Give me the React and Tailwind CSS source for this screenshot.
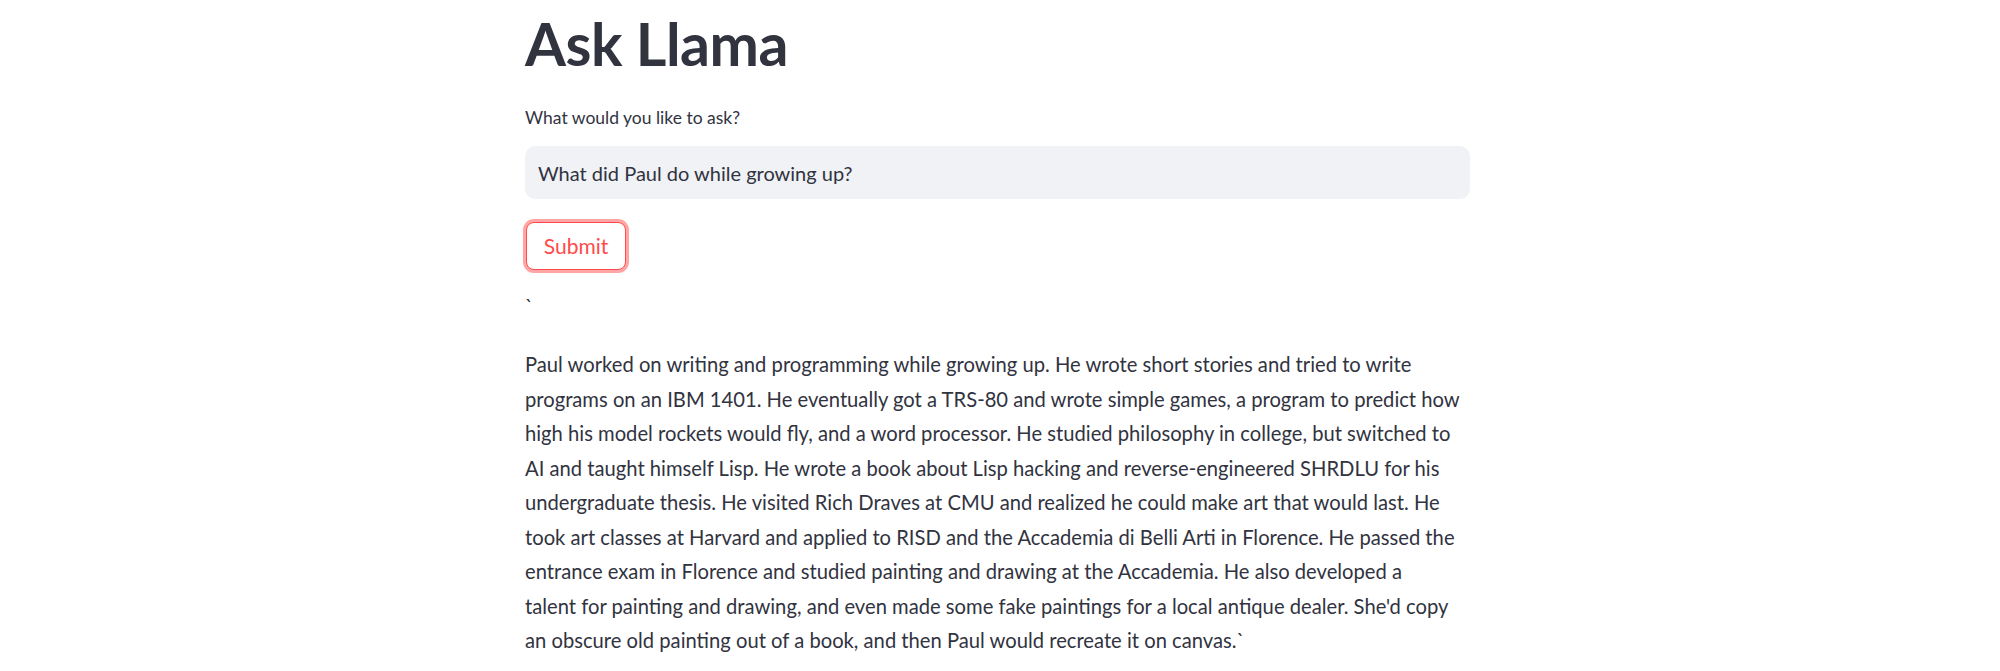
import React from "react";

const answer = [
  "Paul worked on writing and programming while growing up. He wrote short stories and tried to write",
  "programs on an IBM 1401. He eventually got a TRS-80 and wrote simple games, a program to predict how",
  "high his model rockets would fly, and a word processor. He studied philosophy in college, but switched to",
  "AI and taught himself Lisp. He wrote a book about Lisp hacking and reverse-engineered SHRDLU for his",
  "undergraduate thesis. He visited Rich Draves at CMU and realized he could make art that would last. He",
  "took art classes at Harvard and applied to RISD and the Accademia di Belli Arti in Florence. He passed the",
  "entrance exam in Florence and studied painting and drawing at the Accademia. He also developed a",
  "talent for painting and drawing, and even made some fake paintings for a local antique dealer. She'd copy",
  "an obscure old painting out of a book, and then Paul would recreate it on canvas.`",
];

const App = () => {
  return (
    <div className="min-h-screen bg-white text-[#31333f] font-['Lato',sans-serif]">
      <div className="mx-auto w-[950px] pr-[5px] pt-[9px]">
        {/* Title */}
        <h1 className="text-[59px] font-bold leading-[70px] tracking-[-0.5px]">Ask Llama</h1>

        {/* Question input */}
        <label className="mt-[28px] block text-[17.5px] leading-[22px]">What would you like to ask?</label>
        <div className="mt-[17px] flex h-[53px] items-center rounded-[10px] bg-[#f0f2f6] px-[13px] text-[20px]">
          What did Paul do while growing up?
        </div>

        <button className="mt-[23px] ml-[1px] flex h-[48px] w-[100px] items-center justify-center rounded-[8px] border-[1.5px] border-[#ff4b4b] bg-white text-[21px] text-[#ff4b4b] ring-[3px] ring-[#ff4b4b]/50">
          Submit
        </button>

        <div className="mt-[18px] text-[20px] leading-[34px]">`</div>

        {/* Answer */}
        <div className="mt-[25px] text-[20.2px] leading-[34.5px]">
          {answer.map((line, i) => (
            <div key={i} className="whitespace-nowrap">
              {line}
            </div>
          ))}
        </div>
      </div>
    </div>
  );
};

export default App;
